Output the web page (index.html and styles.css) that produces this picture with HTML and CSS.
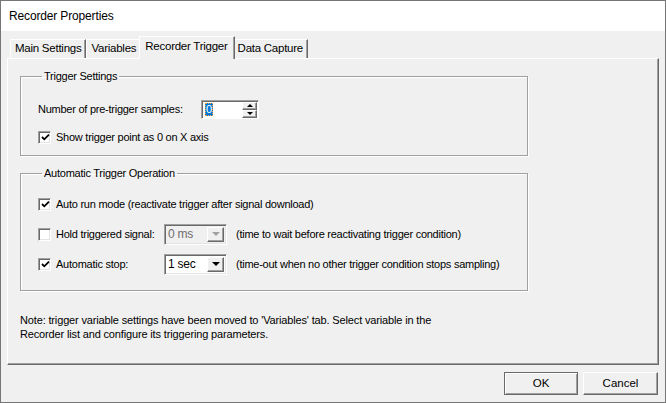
FILE: index.html
```html
<!DOCTYPE html>
<html>
<head>
<meta charset="utf-8">
<title>Recorder Properties</title>
<link rel="stylesheet" href="styles.css">
</head>
<body>
<div class="window">
  <div class="titlebar">Recorder Properties</div>
  <div class="client">
    <div class="tabs">
      <div class="tab first">Main Settings</div>
      <div class="tab">Variables</div>
      <div class="tab active">Recorder Trigger</div>
      <div class="tab">Data Capture</div>
    </div>
    <div class="panel">
      <fieldset class="group g1">
        <legend>Trigger Settings</legend>
        <div class="row">
          <span class="lbl-samples">Number of pre-trigger samples:</span>
          <div class="spin">
            <div class="spin-field"><span class="sel">0</span></div>
            <div class="spin-btns">
              <div class="sbtn"><span class="tri-up"></span></div>
              <div class="sbtn"><span class="tri-down"></span></div>
            </div>
          </div>
        </div>
        <div class="row">
          <span class="cb"><svg width="9" height="9" viewBox="0 0 9 9"><path d="M1 4 L3.3 6.3 L8 1.6" fill="none" stroke="#000" stroke-width="1.8"/></svg></span>
          <span>Show trigger point as 0 on X axis</span>
        </div>
      </fieldset>
      <fieldset class="group g2">
        <legend>Automatic Trigger Operation</legend>
        <div class="row">
          <span class="cb"><svg width="9" height="9" viewBox="0 0 9 9"><path d="M1 4 L3.3 6.3 L8 1.6" fill="none" stroke="#000" stroke-width="1.8"/></svg></span>
          <span>Auto run mode (reactivate trigger after signal download)</span>
        </div>
        <div class="row">
          <span class="cb"></span>
          <span class="lbl-opt">Hold triggered signal:</span>
          <div class="combo disabled">
            <span class="combo-val">0 ms</span>
            <span class="combo-btn"><span class="tri-down"></span></span>
          </div>
          <span class="hint">(time to wait before reactivating trigger condition)</span>
        </div>
        <div class="row">
          <span class="cb"><svg width="9" height="9" viewBox="0 0 9 9"><path d="M1 4 L3.3 6.3 L8 1.6" fill="none" stroke="#000" stroke-width="1.8"/></svg></span>
          <span class="lbl-opt">Automatic stop:</span>
          <div class="combo">
            <span class="combo-val">1 sec</span>
            <span class="combo-btn"><span class="tri-down"></span></span>
          </div>
          <span class="hint">(time-out when no other trigger condition stops sampling)</span>
        </div>
      </fieldset>
      <p class="note">Note: trigger variable settings have been moved to 'Variables' tab. Select variable in the<br>Recorder list and configure its triggering parameters.</p>
    </div>
    <div class="buttons">
      <div class="btn default">OK</div>
      <div class="btn">Cancel</div>
    </div>
  </div>
</div>
</body>
</html>
```
FILE: styles.css
```css
* { box-sizing: border-box; }
html, body { margin: 0; padding: 0; background: #fff; }
body {
  font-family: "Liberation Sans", Arial, sans-serif;
  font-size: 11px;
  letter-spacing: -0.25px;
  color: #000;
}
.window {
  width: 666px;
  height: 403px;
  border: 1px solid #767676;
  display: flex;
  flex-direction: column;
  background: #f0f0f0;
}
.titlebar {
  height: 30px;
  line-height: 30px;
  background: #fff;
  font-size: 12px;
  letter-spacing: -0.15px;
  padding-left: 8px;
  color: #000;
}
.client {
  flex: 1;
  display: flex;
  flex-direction: column;
  padding: 6px 6px 0 6px;
}
.tabs {
  display: flex;
  align-items: flex-end;
  height: 21px;
  padding-left: 3px;
  position: relative;
  z-index: 2;
}
.tab {
  height: 19px;
  line-height: 17px;
  padding: 0 4px 0 4px;
  border-top: 1px solid #fff;
  border-left: 1px solid #fff;
  border-right: 1px solid #696969;
  box-shadow: inset -1px 0 #a0a0a0;
  background: #f0f0f0;
  font-size: 11.5px;
}
.tab.active {
  height: 23px;
  margin: 0 -1px -1px -2px;
  padding: 1px 6px 0 5px;
  line-height: 16px;
  position: relative;
  z-index: 3;
}
.tab.active + .tab { margin-left: -1px; }
.panel {
  width: 652px;
  height: 307px;
  border-top: 1px solid #fff;
  border-left: 1px solid #fff;
  border-right: 1px solid #696969;
  border-bottom: 1px solid #696969;
  box-shadow: inset -1px -1px #a0a0a0;
  padding: 11px 12px 0 12px;
  position: relative;
  z-index: 1;
}
.group {
  margin: 0;
  width: 508px;
  border: 1px solid #a0a0a0;
  box-shadow: inset 1px 1px #fff, 1px 1px #fff;
  padding: 16px 10px 8px 17px;
}
.group legend {
  padding: 0 2px;
  margin-left: 4px;
  line-height: 13px;
  height: 13px;
}
.g1 .row + .row { margin-top: 8px; }
.g2 { margin-top: 11px; padding-top: 13px; padding-bottom: 15px; }
.g2 .row + .row { margin-top: 8px; }
.row {
  display: flex;
  align-items: center;
  height: 20px;
  white-space: nowrap;
}
.g2 .row { height: 22px; }
.lbl-samples { width: 163px; }
.spin {
  display: flex;
  width: 58px;
  height: 19px;
  border-top: 1px solid #a0a0a0;
  border-left: 1px solid #a0a0a0;
  border-right: 1px solid #fff;
  border-bottom: 1px solid #fff;
  box-shadow: inset 1px 1px #696969;
  background: #fff;
}
.spin-field {
  flex: 1;
  padding: 2px 0 0 3px;
  line-height: 13px;
}
.sel {
  display: inline-block;
  background: #0078d7;
  color: #fff;
  padding: 0 1px;
  outline: 1px dotted #ff9b3a;
  outline-offset: -1px;
}
.spin-btns {
  width: 16px;
  display: flex;
  flex-direction: column;
  padding: 1px 1px 0 0;
}
.sbtn {
  flex: 1;
  display: flex;
  align-items: center;
  justify-content: center;
  background: #f0f0f0;
  border-top: 1px solid #fff;
  border-left: 1px solid #fff;
  border-right: 1px solid #696969;
  border-bottom: 1px solid #696969;
  box-shadow: inset -1px -1px #a0a0a0;
}
.tri-up {
  width: 0; height: 0;
  border-left: 3px solid transparent;
  border-right: 3px solid transparent;
  border-bottom: 3px solid #000;
}
.tri-down {
  width: 0; height: 0;
  border-left: 3px solid transparent;
  border-right: 3px solid transparent;
  border-top: 3px solid #000;
}
.cb {
  width: 13px;
  height: 13px;
  flex: none;
  border-top: 1px solid #a0a0a0;
  border-left: 1px solid #a0a0a0;
  border-right: 1px solid #fff;
  border-bottom: 1px solid #fff;
  box-shadow: inset 1px 1px #696969, inset -1px -1px #e3e3e3;
  background: #fff;
  display: flex;
  align-items: center;
  justify-content: center;
  margin-right: 5px;
}
.cb svg { display: block; margin: 1px 0 0 1px; }
.lbl-opt { width: 108px; }
.combo {
  width: 63px;
  height: 21px;
  display: flex;
  align-items: stretch;
  background: #fff;
  border-top: 1px solid #a0a0a0;
  border-left: 1px solid #a0a0a0;
  border-right: 1px solid #fff;
  border-bottom: 1px solid #fff;
  box-shadow: inset 1px 1px #696969, inset -1px -1px #e3e3e3;
  margin-right: 9px;
}
.combo-val {
  flex: 1;
  padding: 3px 0 0 3px;
  line-height: 13px;
  font-size: 12px;
}
.combo-btn {
  width: 17px;
  margin: 2px 2px 2px 0;
  display: flex;
  align-items: center;
  justify-content: center;
  background: #f0f0f0;
  border-top: 1px solid #fff;
  border-left: 1px solid #fff;
  border-right: 1px solid #696969;
  border-bottom: 1px solid #696969;
  box-shadow: inset -1px -1px #a0a0a0;
}
.combo-btn .tri-down {
  border-left-width: 4px;
  border-right-width: 4px;
  border-top-width: 4px;
}
.combo.disabled { background: #f0f0f0; }
.combo.disabled .combo-val { color: #6d6d6d; }
.combo.disabled .tri-down { border-top-color: #a0a0a0; }
.note {
  margin: 22px 0 0 0;
  line-height: 14px;
  letter-spacing: -0.15px;
}
.buttons {
  display: flex;
  justify-content: flex-end;
  gap: 5px;
  margin-top: 7px;
  padding-right: 1px;
}
.btn {
  width: 75px;
  height: 23px;
  line-height: 21px;
  text-align: center;
  font-size: 11.5px;
  letter-spacing: 0;
  background: #f0f0f0;
  border-top: 1px solid #fff;
  border-left: 1px solid #fff;
  border-right: 1px solid #696969;
  border-bottom: 1px solid #696969;
  box-shadow: inset -1px -1px #a0a0a0;
}
.btn.default {
  width: 74px;
  border: 1px solid #696969;
  box-shadow: inset 1px 1px #fff, inset -1px -1px #a0a0a0;
}
```
